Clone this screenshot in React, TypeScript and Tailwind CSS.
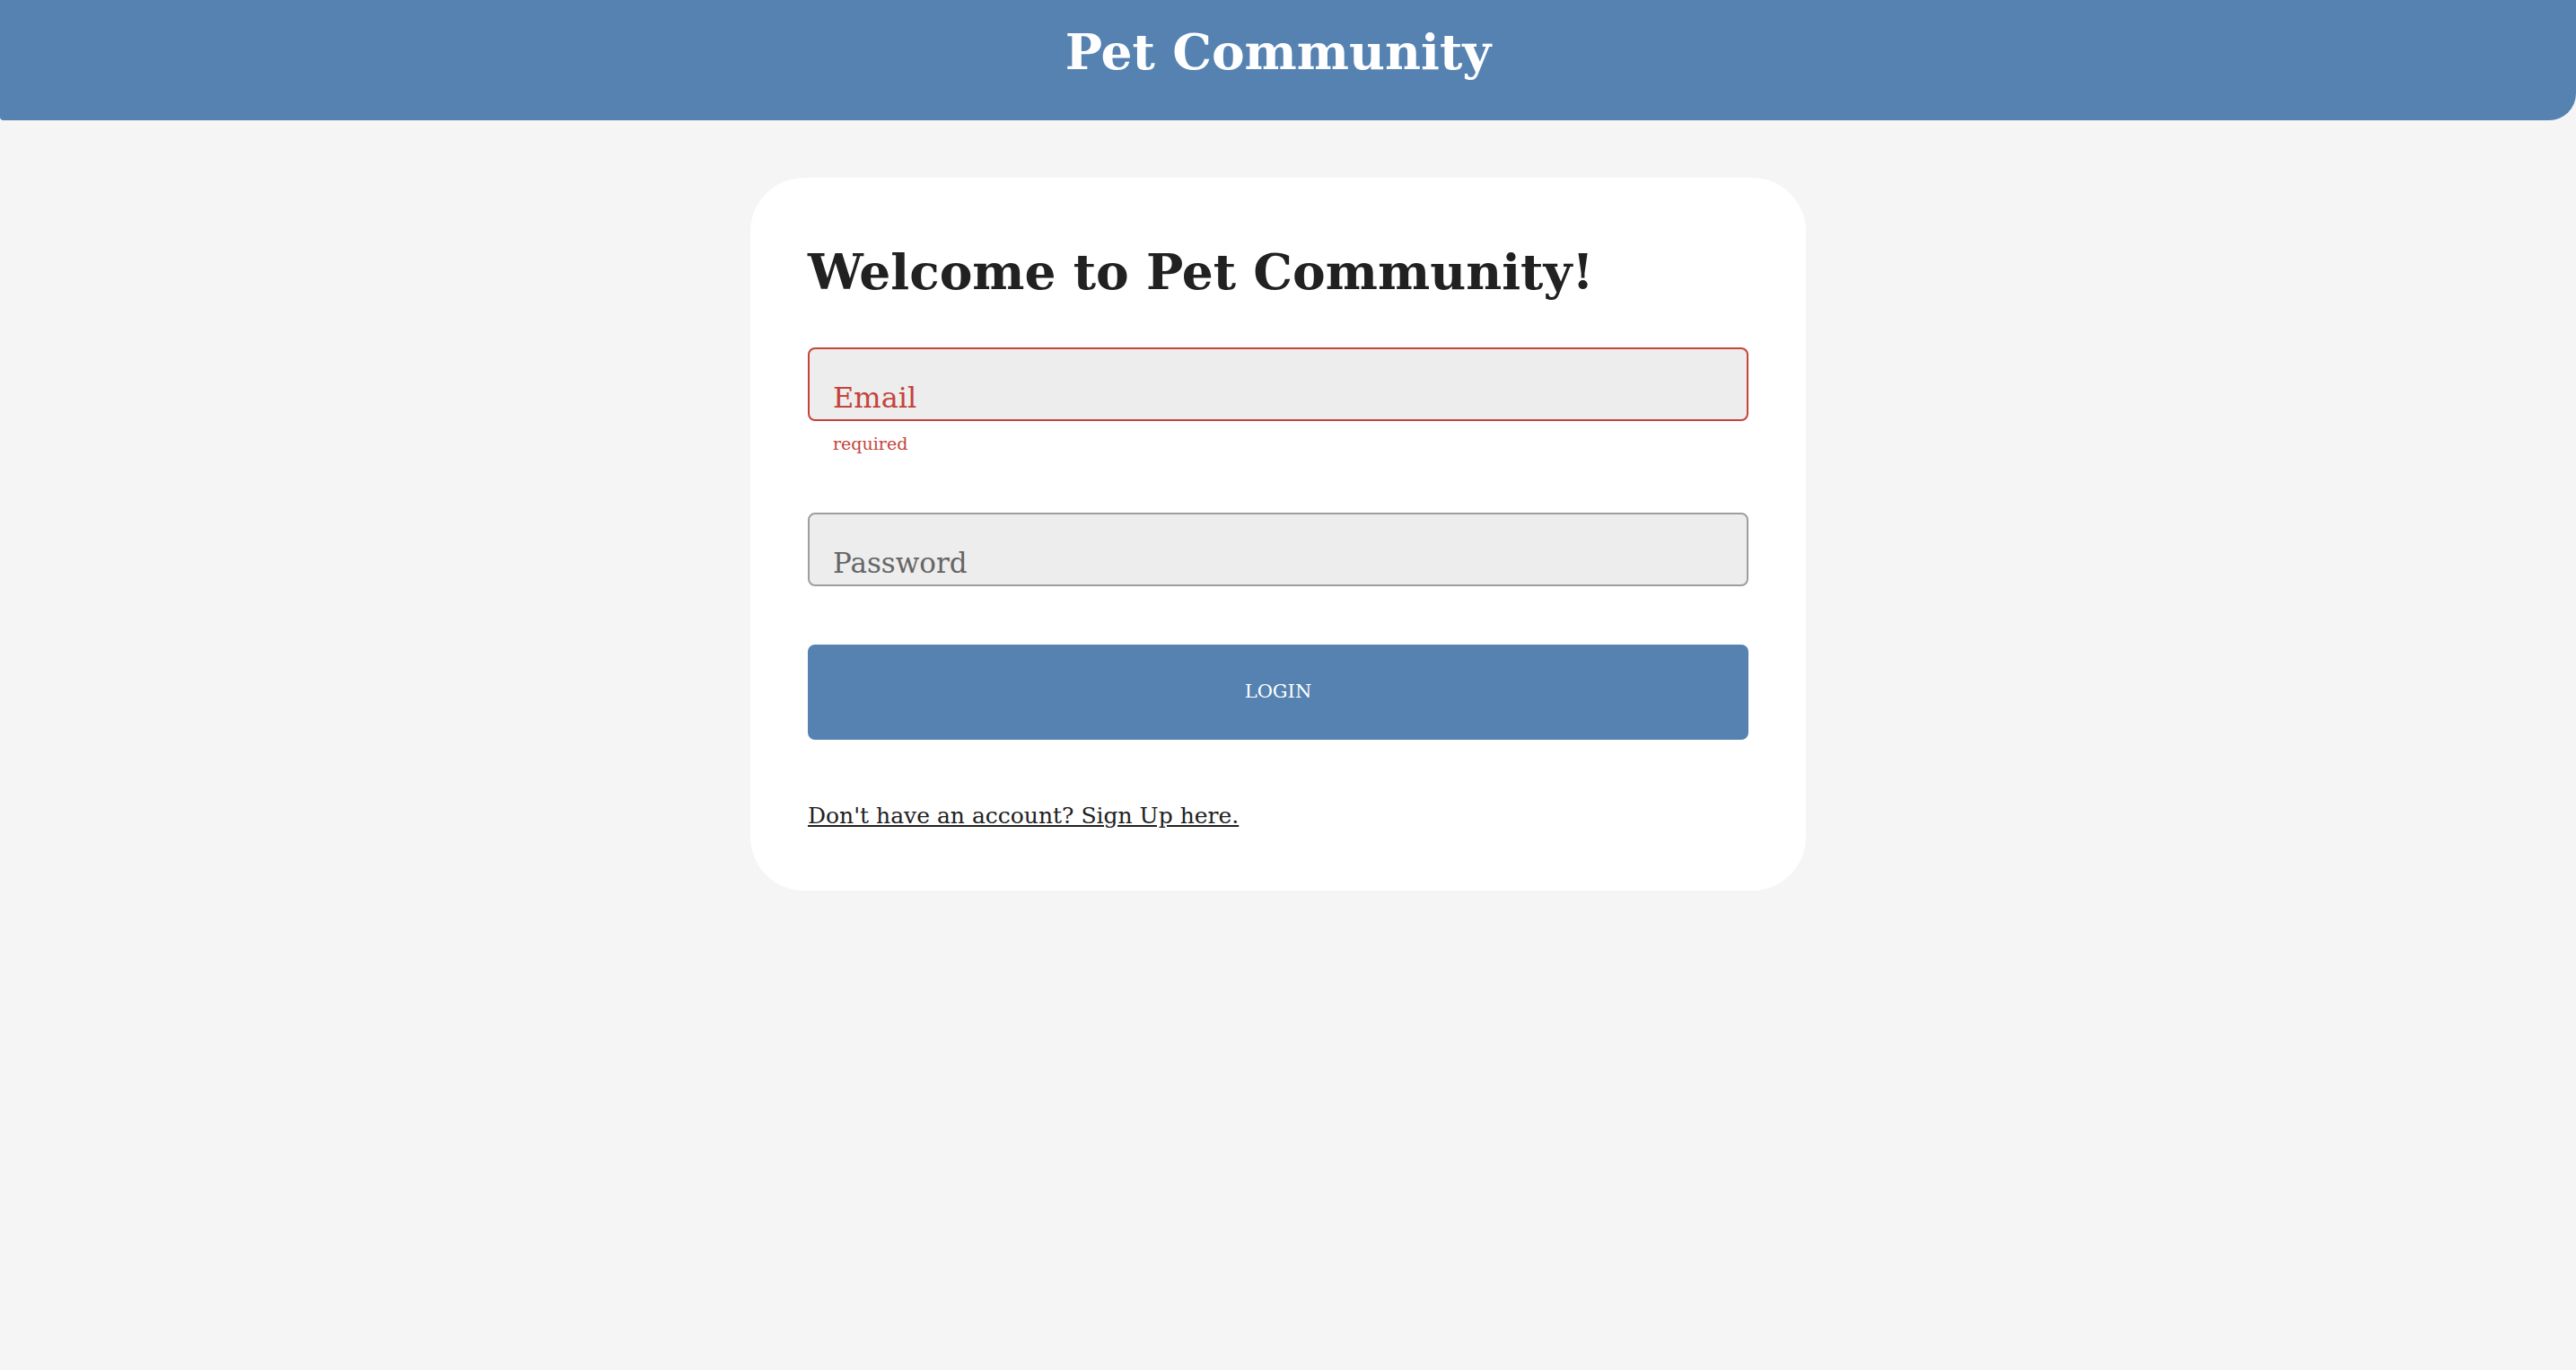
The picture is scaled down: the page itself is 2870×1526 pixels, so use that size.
import React from "react";

const serif = "font-['DejaVu_Serif',_'Liberation_Serif',_serif]";

export default function App() {
  return (
    <div className={`min-h-[1526px] w-full bg-[#f5f5f5] ${serif}`}>
      <header className="flex h-[134px] items-start justify-center rounded-bl-[4px] rounded-br-[30px] bg-[#5582b1] pr-[22px] pt-[30px]">
        <h1 className="text-[55px] font-bold leading-none text-white">Pet Community</h1>
      </header>

      <main className="flex justify-center pr-[22px] pt-[64px]">
        <div className="flex w-[1176px] flex-col rounded-[60px] bg-white px-[64px] pb-[70px] pt-[65px]">
          <h2 className="text-[55px] font-bold leading-[79px] text-[#212121]">Welcome to Pet Community!</h2>

          <div className="mt-[45px] flex h-[82px] items-end rounded-[8px] border-2 border-[#c5433b] bg-[#ededed] px-[26px] pb-[8px]">
            <span className="text-[32px] leading-none text-[#c5433b]">Email</span>
          </div>
          <p className="mt-[15px] pl-[28px] text-[19px] leading-[20px] text-[#c5433b]">required</p>

          <div className="mt-[67px] flex h-[82px] items-end rounded-[8px] border-2 border-[#9e9e9e] bg-[#ededed] px-[26px] pb-[8px]">
            <span className="text-[31px] leading-none text-[#666666]">Password</span>
          </div>

          <button className="mt-[65px] flex h-[106px] items-center justify-center rounded-[8px] bg-[#5582b1] text-[21px] uppercase text-white">
            Login
          </button>

          <a href="#" className="mt-[72px] self-start text-[25px] leading-[26px] text-[#212121] underline">
            Don't have an account? Sign Up here.
          </a>
        </div>
      </main>
    </div>
  );
}
